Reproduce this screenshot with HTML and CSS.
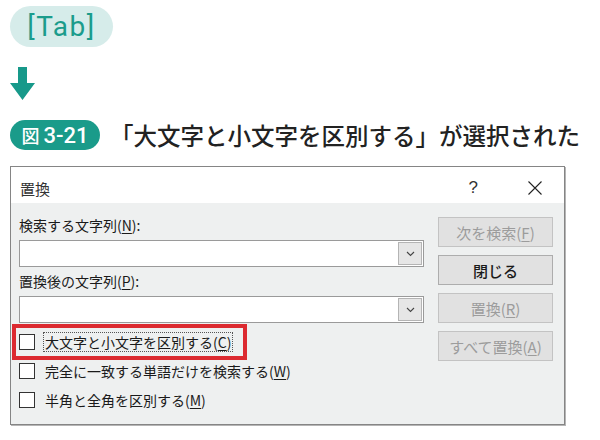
FILE: index.html
```html
<!DOCTYPE html>
<html lang="ja">
<head>
<meta charset="utf-8">
<title>置換</title>
<link rel="stylesheet" href="styles.css">
</head>
<body>
<div class="page">
  <div class="tab-pill">[Tab]</div>
  <svg class="arrow" width="25" height="33" viewBox="0 0 25 33"><path d="M8 0h9v16h8L12.5 33 0 16h8z" fill="#17998a"/></svg>
  <div class="fig-row">
    <span class="fig-badge"><span class="fig-zu">図</span><span class="fig-num">3-21</span></span>
    <h1 class="fig-title">「大文字と小文字を区別する」が選択された</h1>
  </div>
  <div class="dialog">
    <div class="titlebar">
      <span class="dlg-title">置換</span>
      <span class="help">?</span>
      <svg class="close" width="14" height="14" viewBox="0 0 14 14"><path d="M0.5 0.5L13.5 13.5M13.5 0.5L0.5 13.5" stroke="#222" stroke-width="1.1" fill="none"/></svg>
    </div>
    <div class="dlg-body">
      <div class="left">
        <div class="field-label">検索する文字列(<u>N</u>):</div>
        <div class="combo"><span class="combo-btn"><svg width="9" height="6" viewBox="0 0 9 6"><path d="M1 1l3.5 3.5L8 1" stroke="#444" stroke-width="1.1" fill="none"/></svg></span></div>
        <div class="field-label second">置換後の文字列(<u>P</u>):</div>
        <div class="combo"><span class="combo-btn"><svg width="9" height="6" viewBox="0 0 9 6"><path d="M1 1l3.5 3.5L8 1" stroke="#444" stroke-width="1.1" fill="none"/></svg></span></div>
        <div class="checks">
          <div class="check-row">
            <span class="box"></span><span class="check-text focus">大文字と小文字を区別する(<u>C</u>)</span>
            <span class="highlight"></span>
          </div>
          <div class="check-row">
            <span class="box"></span><span class="check-text">完全に一致する単語だけを検索する(<u>W</u>)</span>
          </div>
          <div class="check-row">
            <span class="box"></span><span class="check-text">半角と全角を区別する(<u>M</u>)</span>
          </div>
        </div>
      </div>
      <div class="right">
        <div class="btn disabled">次を検索(<u>F</u>)</div>
        <div class="btn default">閉じる</div>
        <div class="btn disabled">置換(<u>R</u>)</div>
        <div class="btn disabled">すべて置換(<u>A</u>)</div>
      </div>
    </div>
  </div>
</div>
</body>
</html>
```

FILE: styles.css
```css
* { box-sizing: border-box; }
html, body { margin: 0; padding: 0; background: #ffffff; }
body {
  width: 600px;
  height: 440px;
  overflow: hidden;
  font-family: "Noto Sans CJK JP", "Noto Sans", sans-serif;
  color: #1a1a1a;
}
.page {
  padding: 6px 0 0 10px;
  display: flex;
  flex-direction: column;
  align-items: flex-start;
}
.tab-pill {
  width: 103px;
  height: 41px;
  border-radius: 21px;
  background: #d6ecea;
  color: #1b9c8c;
  font-family: Roboto, "Liberation Sans", sans-serif;
  font-size: 28px;
  display: flex;
  align-items: center;
  justify-content: center;
  letter-spacing: 1.5px;
}
.arrow {
  display: block;
  margin-top: 20px;
}
.fig-row {
  margin-top: 20px;
  height: 30px;
  display: flex;
  align-items: center;
}
.fig-badge {
  width: 90px;
  height: 30px;
  border-radius: 15px;
  background: #1a9b8a;
  color: #ffffff;
  display: flex;
  align-items: center;
  justify-content: center;
  gap: 4px;
  font-size: 20px;
}
.fig-zu {
  font-family: "Noto Sans CJK JP", sans-serif;
  font-weight: 500;
  font-size: 18px;
}
.fig-num {
  font-family: Roboto, "Liberation Sans", sans-serif;
  font-weight: 500;
  font-size: 22px;
}
.fig-title {
  margin: 0 0 0 10px;
  font-size: 23.5px;
  font-weight: 500;
  color: #222222;
  white-space: nowrap;
  line-height: 30px;
}
.dialog {
  margin-top: 16px;
  width: 555px;
  height: 259px;
  border: 1px solid #858585;
  box-shadow: 1px 1px 0 #b5b5b5;
  background: #eef0f0;
  display: flex;
  flex-direction: column;
}
.titlebar {
  height: 36px;
  background: #ffffff;
  display: flex;
  align-items: center;
  padding: 6px 0 0 9px;
}
.dlg-title {
  font-size: 15px;
  color: #333333;
  flex: 1;
}
.help {
  font-family: "Liberation Sans", sans-serif;
  font-size: 17px;
  color: #333333;
  margin-right: 50px;
}
.close {
  display: block;
  margin-right: 22px;
}
.dlg-body {
  flex: 1;
  display: flex;
  align-items: flex-start;
  padding: 12px 11px 0 8px;
  gap: 14px;
}
.left {
  width: 405px;
  display: flex;
  flex-direction: column;
}
.field-label {
  font-size: 14px;
  line-height: 20px;
  height: 20px;
  margin-bottom: 5px;
  color: #1a1a1a;
}
.field-label.second {
  margin-top: 4px;
}
.combo {
  height: 27px;
  background: #ffffff;
  border: 1px solid #9a9a9a;
  display: flex;
  justify-content: flex-end;
  padding: 1px;
}
.combo-btn {
  width: 24px;
  height: 100%;
  background: #e6e6e6;
  border: 1px solid #b4b4b4;
  display: flex;
  align-items: center;
  justify-content: center;
}
.combo-btn svg { display: block; }
.checks {
  margin-top: 4px;
  display: flex;
  flex-direction: column;
}
.check-row {
  position: relative;
  height: 29px;
  display: flex;
  align-items: center;
}
.box {
  width: 16px;
  height: 16px;
  border: 1px solid #333333;
  background: #ffffff;
  margin-right: 8px;
  flex: none;
}
.check-text {
  font-size: 14px;
  line-height: 18px;
  padding: 0 1px;
  border: 1px solid transparent;
  white-space: nowrap;
}
.check-text.focus {
  border: 1px dotted #555555;
}
.highlight {
  position: absolute;
  left: -7px;
  top: -3px;
  width: 235px;
  height: 36px;
  border: 4px solid #dc2a30;
}
.right {
  width: 115px;
  margin-top: 2px;
  display: flex;
  flex-direction: column;
  gap: 8px;
}
.btn {
  height: 30px;
  background: #e1e1e1;
  border: 1px solid #c3c3c3;
  display: flex;
  align-items: center;
  justify-content: center;
  font-size: 15px;
  color: #1a1a1a;
  white-space: nowrap;
}
.btn.disabled {
  color: #9c9c9c;
}
.btn.default {
  font-weight: 500;
  border-color: #adadad;
}
u { text-underline-offset: 2px; }
```
